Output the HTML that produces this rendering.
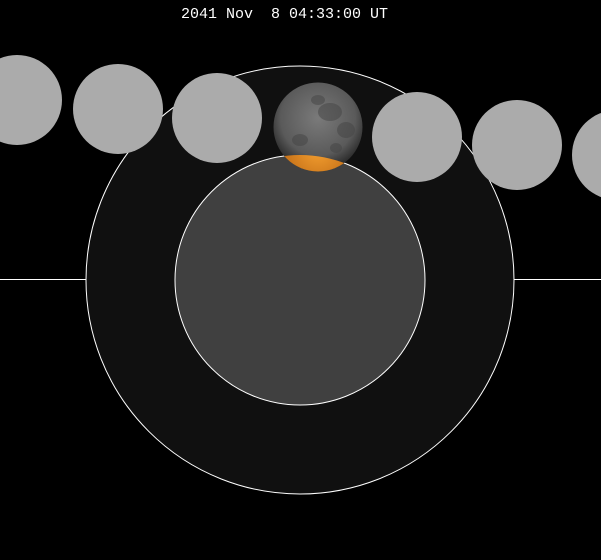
<!DOCTYPE html>
<html><head><style>html,body{margin:0;padding:0;background:#000;}svg{display:block}</style></head>
<body>
<svg width="601" height="560" xmlns="http://www.w3.org/2000/svg">
<defs>
<radialGradient id="mg" cx="50%" cy="40%" r="60%">
<stop offset="0" stop-color="#7a7a7a"/><stop offset="0.7" stop-color="#5a5a5a"/><stop offset="1" stop-color="#262626"/>
</radialGradient>
<radialGradient id="og" cx="50%" cy="75%" r="50%">
<stop offset="0" stop-color="#f5a030"/><stop offset="1" stop-color="#b86412"/>
</radialGradient>
<clipPath id="umb"><circle cx="300" cy="280" r="125"/></clipPath>
</defs>
<rect width="601" height="560" fill="#000"/>
<line x1="0" y1="279.5" x2="90" y2="279.5" stroke="#fff" stroke-width="1"/>
<line x1="510" y1="279.5" x2="601" y2="279.5" stroke="#fff" stroke-width="1"/>
<circle cx="300" cy="280" r="214" fill="#101010" stroke="#fff" stroke-width="1"/>
<circle cx="300" cy="280" r="125" fill="#404040" stroke="#fff" stroke-width="1"/>
<g fill="#ababab">
<circle cx="17" cy="100" r="45"/>
<circle cx="118" cy="109" r="45"/>
<circle cx="217" cy="118" r="45"/>
<circle cx="417" cy="137" r="45"/>
<circle cx="517" cy="145" r="45"/>
<circle cx="617" cy="155" r="45"/>
</g>
<circle cx="318" cy="127" r="44.5" fill="url(#mg)"/>
<g fill="#444" opacity="0.5">
<ellipse cx="330" cy="112" rx="12" ry="9"/><ellipse cx="346" cy="130" rx="9" ry="8"/><ellipse cx="300" cy="140" rx="8" ry="6"/><ellipse cx="318" cy="100" rx="7" ry="5"/><ellipse cx="336" cy="148" rx="6" ry="5"/>
</g>
<circle cx="318" cy="127" r="44.5" fill="url(#og)" clip-path="url(#umb)"/>
<text x="181" y="18" fill="#fff" font-family="Liberation Mono, monospace" font-size="15" xml:space="preserve">2041 Nov  8 04:33:00 UT</text>
</svg>
</body></html>
